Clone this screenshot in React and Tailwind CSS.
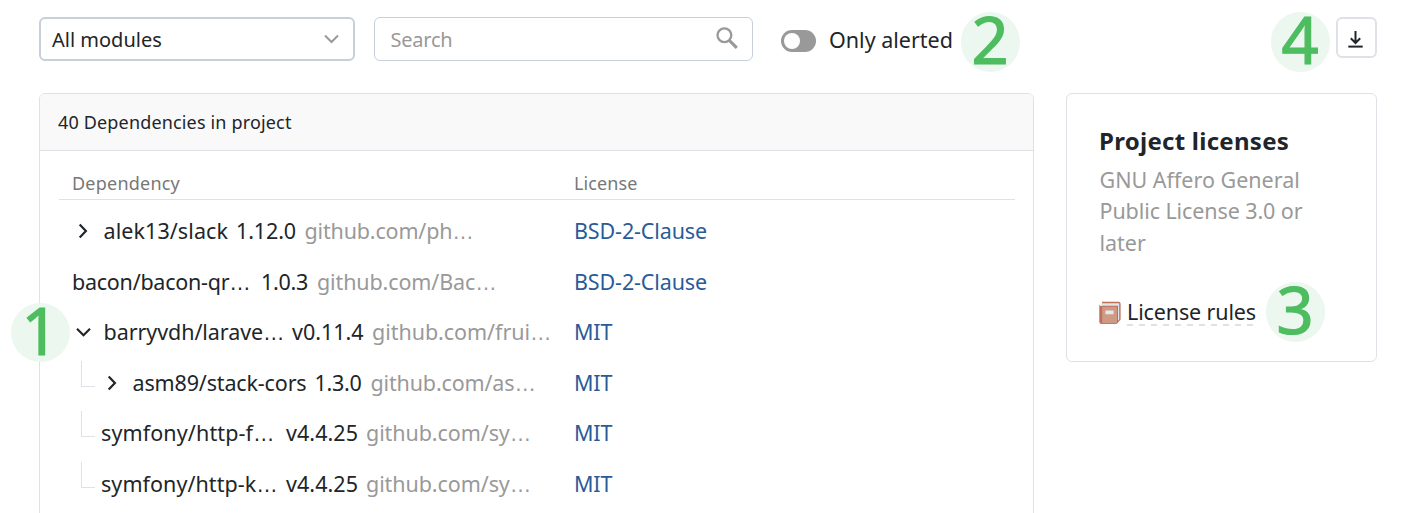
const rows = [
  { name: "alek13/slack", nameCls: "w-[132.5px] tracking-[0.08px]", version: "1.12.0", verCls: "w-[68.5px] tracking-[-0.12px]", url: "github.com/ph…", urlCls: "tracking-[-0.17px]", license: "BSD-2-Clause", toggle: "closed" },
  { name: "bacon/bacon-qr…", nameCls: "w-[189px] tracking-[-0.25px]", version: "1.0.3", verCls: "w-[56px] tracking-[-0.28px]", url: "github.com/Bac…", urlCls: "tracking-[-0.12px]", license: "BSD-2-Clause" },
  { name: "barryvdh/larave…", nameCls: "w-[188.5px] tracking-[-0.07px]", version: "v0.11.4", verCls: "w-[80px]", url: "github.com/frui…", urlCls: "tracking-[-0.04px]", license: "MIT", toggle: "open" },
  { name: "asm89/stack-cors", nameCls: "w-[182px] tracking-[-0.15px]", version: "1.3.0", verCls: "w-[56px] tracking-[-0.28px]", url: "github.com/as…", urlCls: "tracking-[-0.15px]", license: "MIT", toggle: "closed", child: true },
  { name: "symfony/http-f…", nameCls: "w-[185px] tracking-[0.12px]", version: "v4.4.25", verCls: "w-[80px] tracking-[0.05px]", url: "github.com/sy…", urlCls: "tracking-[-0.08px]", license: "MIT", child: true },
  { name: "symfony/http-k…", nameCls: "w-[185px] tracking-[0.06px]", version: "v4.4.25", verCls: "w-[80px] tracking-[0.05px]", url: "github.com/sy…", urlCls: "tracking-[-0.08px]", license: "MIT", child: true },
];

function Truncated({ text }) {
  if (!text.endsWith("…")) return text;
  return (
    <>
      {text.slice(0, -1)}
      <span className="font-['Liberation_Sans',sans-serif] leading-none">…</span>
    </>
  );
}

function Toggle({ state }) {
  return (
    <span className="flex w-[31.5px] shrink-0 items-center pl-[4px]">
      <svg width="15" height="16" viewBox="0 0 15 16" fill="none" stroke="#212529" strokeWidth="2.2">
        {state === "open" ? <path d="M1 4.8 7.5 11.2 14 4.8" /> : <path d="M3.7 1.6 9.9 8 3.7 14.4" />}
      </svg>
    </span>
  );
}

function Badge({ n, className }) {
  return (
    <span className={`absolute z-10 flex size-[59.6px] justify-center rounded-full bg-[#ebf7ef] text-[65px] text-[#4dbd60] ${className}`}>
      <span className="-mt-[4px] -ml-[1px] block leading-[62px] [-webkit-text-stroke:1.2px_#4dbd60]">{n}</span>
    </span>
  );
}

function Row({ row }) {
  return (
    <div className="flex h-[50.5px] items-center pl-[13px] whitespace-nowrap">
      <div className="flex w-[502px] shrink-0 items-center">
        {row.child && <span className="mr-[6px] ml-[9px] h-[26px] w-[14px] -translate-y-[9px] border-b border-l border-[#dee2e6]" />}
        {row.toggle && <Toggle state={row.toggle} />}
        <span className={`shrink-0 ${row.nameCls}`}><Truncated text={row.name} /></span>
        <span className={`shrink-0 ${row.verCls}`}>{row.version}</span>
        <span className={`text-[#999] ${row.urlCls}`}><Truncated text={row.url} /></span>
      </div>
      <span className="tracking-[-0.13px] text-[#2a5b98]">{row.license}</span>
    </div>
  );
}

function BookIcon() {
  return (
    <svg width="22" height="24" viewBox="0 0 22 24" className="shrink-0">
      <path d="M3 .8h16.6a2 2 0 0 1 2 2v15.6l-3 3.6H3z" fill="#bd705a" />
      <path d="M3.4 2.2h16.8v16.4l-1.2 1.2V4.8H3.4a1.3 1.3 0 0 1 0-2.6z" fill="#dfe5ea" />
      <path d="M.3 3.4C.5 4.6 2 4.9 3.6 4.9h13.4a1.8 1.8 0 0 1 1.8 1.8v14.6a1.8 1.8 0 0 1-1.8 1.8H2.6A2.3 2.3 0 0 1 .3 20.8z" fill="#bd705a" />
      <path d="M3.2 5.7h13.6a1.2 1.2 0 0 1 1.2 1.2v14.2a1.2 1.2 0 0 1-1.2 1.2H3.2z" fill="#cf9a83" />
      <rect x="6.4" y="9.4" width="8.2" height="3.8" rx=".5" fill="#e3e7ee" />
    </svg>
  );
}

export default function App() {
  return (
    <div className="relative flex h-[513px] flex-col overflow-hidden bg-white pl-[39px] font-['Noto_Sans',sans-serif] text-[21.5px] text-[#212529]">
      <header className="flex h-[93px] shrink-0 items-start pt-[17px]">
        <div className="flex h-[44px] w-[316px] items-center justify-between rounded-[6px] border-2 border-[#c6cfda] pr-[14px] pl-[11px] text-[20px]">
          <span className="pt-[2px]">All modules</span>
          <svg width="15" height="10" viewBox="0 0 15 10" fill="none" stroke="#999" strokeWidth="2">
            <path d="M1 1.5 7.5 8 14 1.5" />
          </svg>
        </div>
        <div className="ml-[19px] flex h-[44px] w-[379px] items-center justify-between rounded-[6px] border border-[#c6cfda] pr-[14px] pl-[15.5px] text-[20px] tracking-[-0.22px] text-[#999]">
          <span className="pt-[2px]">Search</span>
          <svg width="22" height="23" viewBox="0 0 22 23" fill="none" stroke="#999" className="-translate-y-px">
            <circle cx="8.4" cy="8.2" r="6.9" strokeWidth="2.3" />
            <path d="M13 13.2 20.8 20.8" strokeWidth="3.1" />
          </svg>
        </div>
        <div className="relative ml-[28px] flex h-[46px] items-center">
          <span className="mt-[2px] flex h-[22px] w-[35px] items-center rounded-full bg-[#999] pl-[3px]">
            <span className="size-[16px] rounded-full bg-white" />
          </span>
          <span className="ml-[13px]">Only alerted</span>
          <Badge n="2" className="top-[-4.7px] left-[179.7px]" />
        </div>
        <div className="relative mr-[36px] ml-auto flex size-[41px] items-center justify-center rounded-[6px] border-2 border-[#dee2e6]">
          <svg width="15" height="17" viewBox="0 0 15 17" fill="none" stroke="#212529" strokeWidth="2" className="mt-[3px] mr-[2px]">
            <path d="M7.5 0v12M2.8 7.3l4.7 4.7 4.7-4.7" />
            <path d="M.3 15.6h14.4" />
          </svg>
          <Badge n="4" className="top-[-6.7px] left-[-67.3px]" />
        </div>
      </header>

      <main className="flex min-h-0 flex-1 items-start gap-[32px]">
        <section className="h-[440px] w-[995px] rounded-t-[6px] border border-[#dee2e6]">
          <h2 className="flex h-[57px] items-center rounded-t-[5px] border-b border-[#dee2e6] bg-[#f9f9f9] pl-[18px] text-[18px] tracking-[0.16px]">
            40 Dependencies in project
          </h2>
          <div className="px-[18px] pl-[19px]">
            <div className="mb-[6px] flex h-[49px] items-end border-b border-[#dee2e6] pb-[2px] pl-[13px] text-[18px] text-[#777]">
              <span className="w-[502px] tracking-[0.22px]">Dependency</span>
              <span className="tracking-[0.1px]">License</span>
            </div>
            {rows.map((row) => (
              <Row key={row.name} row={row} />
            ))}
          </div>
        </section>

        <aside className="relative h-[269px] w-[311px] rounded-[6px] border border-[#dee2e6] pt-[31px] pl-[32px]">
          <h3 className="text-[24px] leading-[32px] font-bold tracking-[0.27px]">Project licenses</h3>
          <p className="mt-[7px] pl-[0.5px] leading-[31.4px] text-[#999]">
            GNU Affero General
            <br />
            <span className="tracking-[-0.09px]">Public License 3.0 or</span>
            <br />
            later
          </p>
          <div className="mt-[41px] flex items-center">
            <BookIcon />
            <span className="ml-[6px] flex flex-col pt-px leading-[24px] tracking-[-0.13px]">
              License rules
              <svg width="128" height="2">
                <path d="M0 1h128" stroke="#dee2e6" strokeWidth="2" strokeDasharray="6 6" />
              </svg>
            </span>
          </div>
          <Badge n="3" className="top-[188.3px] left-[198.7px]" />
        </aside>
      </main>
      <Badge n="1" className="top-[302.5px] left-[10.7px]" />
    </div>
  );
}
